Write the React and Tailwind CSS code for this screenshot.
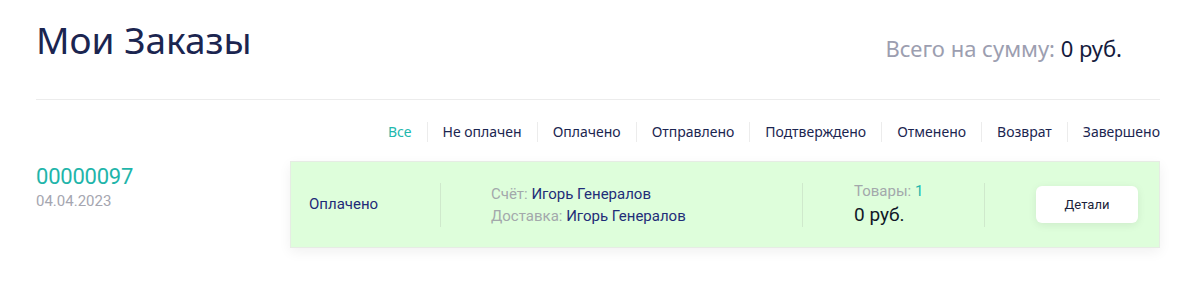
import { useState } from "react";

const tabs = ["Все","Не оплачен","Оплачено","Отправлено","Подтверждено","Отменено","Возврат","Завершено"];

export default function App(){

  const [active,setActive]=useState(0);

  return(

<div className="min-h-screen bg-white px-[36px] pr-[40px] pt-[16px] font-['Roboto',sans-serif]">

  {/* HEADER */}
  <div className="flex items-start justify-between h-[84px] border-b border-[#ececec]">
    <h1 className="font-['Noto_Sans',sans-serif] text-[37px] leading-[48px] text-[#1b2550] font-normal">
      Мои Заказы
    </h1>
    <div className="mt-[17px] mr-[38px] font-['Noto_Sans',sans-serif] text-[22px] leading-[30px] text-[#9c9eb0]">
      Всего на сумму: <span className="text-[#141a3c]">0 руб.</span>
    </div>
  </div>

  {/* TABS */}
  <div className="flex justify-end mt-[22px] font-['Noto_Sans',sans-serif] text-[14px] leading-[20px]">
    {tabs.map((t,i)=>(
      <span
        key={t}
        onClick={()=>setActive(i)}
        className={
          (i===0 ? "pr-[15px] " : "px-[15px] border-l border-[#ececec] ") +
          (i===tabs.length-1 ? "pr-0 " : "") +
          (active===i ? "text-[#22b8ae] " : "text-[#1b2550] ") +
          "cursor-pointer"
        }>
        {t}
      </span>
    ))}
  </div>

  {/* ORDER */}
  <div className="flex mt-[19px]">

    <div className="w-[254px] pt-[4px]">
      <div className="text-[22px] leading-[24px] text-[#1fb5aa] tracking-[-0.01em]">00000097</div>
      <div className="text-[15px] leading-[18px] text-[#a5a6b0] mt-[3px]">04.04.2023</div>
    </div>

    <div className="flex-1 flex items-center h-[87px] bg-[#defedb] border border-[#e6ece4] shadow-[0_4px_12px_rgba(0,0,0,0.06)]">

      <div className="w-[149px] pl-[18px] text-[15px] text-[#1e2a78]">
        Оплачено
      </div>

      <div className="w-[362px] h-[44px] border-l border-[#cfe9cc] pl-[50px] flex flex-col justify-center text-[15px] leading-[22px]">
        <div><span className="text-[#a3a8ab]">Счёт: </span><span className="text-[#1f2d78]">Игорь Генералов</span></div>
        <div><span className="text-[#a3a8ab]">Доставка: </span><span className="text-[#1f2d78]">Игорь Генералов</span></div>
      </div>

      <div className="w-[182px] h-[44px] border-l border-[#cfe9cc] pl-[51px] flex flex-col justify-center">
        <div className="text-[15px] leading-[18px] text-[#a3a8ab]">Товары: <span className="text-[#22b8ae]">1</span></div>
        <div className="text-[19px] leading-[24px] text-[#111827] mt-[3px]">0 руб.</div>
      </div>

      <div className="flex-1 h-[44px] border-l border-[#cfe9cc] flex items-center pl-[51px]">
        <button className="w-[102px] h-[37px] bg-white rounded-[6px] text-[13px] text-[#1b1f3b] shadow-[0_2px_8px_rgba(0,0,0,0.08)]">
          Детали
        </button>
      </div>

    </div>

  </div>

</div>

);
}
